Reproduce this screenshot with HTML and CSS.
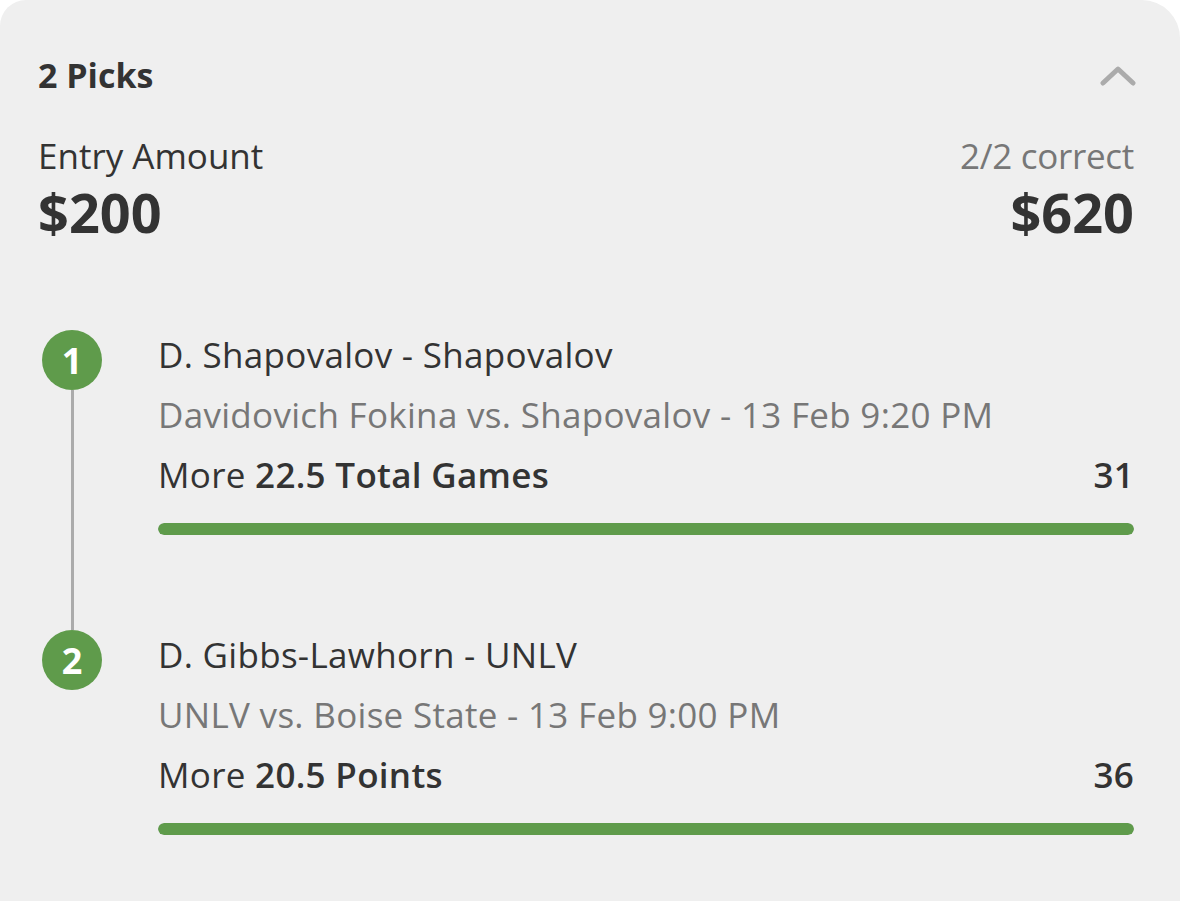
FILE: index.html
```html
<!DOCTYPE html>
<html lang="en">
<head>
  <meta charset="UTF-8">
  <meta name="viewport" content="width=device-width, initial-scale=1.0">
  <title>Entry Details</title>
  <link rel="stylesheet" href="styles.css">
</head>
<body>
  <div class="entry-card">
    <div class="entry-head">
      <div class="entry-title">2 Picks</div>
      <svg class="chevron" width="36" height="22" viewBox="0 0 36 22">
        <path d="M3 19 L18 5 L33 19" fill="none" stroke="#ababab" stroke-width="5" stroke-linecap="round" stroke-linejoin="round"/>
      </svg>
    </div>

    <div class="entry-summary">
      <div class="summary-col">
        <div class="summary-label">Entry Amount</div>
        <div class="summary-value">$200</div>
      </div>
      <div class="summary-col right">
        <div class="summary-label muted">2/2 correct</div>
        <div class="summary-value">$620</div>
      </div>
    </div>

    <div class="picks">
      <div class="pick">
        <div class="pick-rail">
          <div class="pick-num">1</div>
          <div class="pick-line"></div>
        </div>
        <div class="pick-body">
          <div class="pick-name">D. Shapovalov - Shapovalov</div>
          <div class="pick-game">Davidovich Fokina vs. Shapovalov - 13 Feb 9:20 PM</div>
          <div class="pick-stat">
            <span>More <b>22.5 Total Games</b></span>
            <b>31</b>
          </div>
          <div class="pick-bar"><div class="pick-fill" style="width: 100%"></div></div>
        </div>
      </div>

      <div class="pick">
        <div class="pick-rail">
          <div class="pick-num">2</div>
        </div>
        <div class="pick-body">
          <div class="pick-name">D. Gibbs-Lawhorn - UNLV</div>
          <div class="pick-game">UNLV vs. Boise State - 13 Feb 9:00 PM</div>
          <div class="pick-stat">
            <span>More <b>20.5 Points</b></span>
            <b>36</b>
          </div>
          <div class="pick-bar"><div class="pick-fill" style="width: 100%"></div></div>
        </div>
      </div>
    </div>
  </div>
</body>
</html>
```

FILE: styles.css
```css
body {
  margin: 0;
  background: #fff;
  font-family: 'Open Sans', 'Noto Sans', sans-serif;
  color: #333;
}
.entry-card {
  background: #efefef;
  border-radius: 26px 38px 0 0;
  min-height: 901px;
  padding: 53px 46px 0 38px;
  box-sizing: border-box;
}
.entry-head {
  display: flex;
  justify-content: space-between;
  align-items: center;
  height: 44px;
}
.entry-title {
  font-size: 34px;
  font-weight: 700;
}
.chevron {
  margin-right: -2px;
}
.entry-summary {
  display: flex;
  justify-content: space-between;
  margin-top: 37px;
}
.summary-col.right {
  text-align: right;
}
.summary-label {
  font-size: 35px;
  line-height: 44px;
}
.summary-label.muted {
  color: #777;
  letter-spacing: -0.3px;
}
.summary-value {
  font-size: 54px;
  font-weight: 700;
  line-height: 60px;
  margin-top: 4px;
}
.picks {
  margin-top: 88px;
  display: flex;
  flex-direction: column;
}
.pick {
  display: flex;
  min-height: 300px;
}
.pick-rail {
  width: 120px;
  display: flex;
  flex-direction: column;
  align-items: flex-start;
}
.pick-num {
  width: 60px;
  height: 60px;
  margin-left: 4px;
  border-radius: 50%;
  background: #5f9b4b;
  color: #fff;
  font-size: 36px;
  font-weight: 700;
  display: flex;
  align-items: center;
  justify-content: center;
}
.pick-line {
  flex: 1;
  width: 3px;
  margin-left: 33px;
  background: #ababab;
}
.pick-body {
  flex: 1;
  margin-top: -5px;
  font-size: 35px;
  letter-spacing: 0.3px;
  line-height: 60px;
}
.pick-name {
  color: #333;
}
.pick-game {
  color: #777;
}
.pick-stat {
  display: flex;
  justify-content: space-between;
}
.pick-stat b {
  font-weight: 600;
}
.pick-bar {
  height: 12px;
  margin-top: 18px;
  border-radius: 6px;
  background: #d6d6d6;
  overflow: hidden;
}
.pick-fill {
  height: 100%;
  border-radius: 6px;
  background: #5f9b4b;
}
```
